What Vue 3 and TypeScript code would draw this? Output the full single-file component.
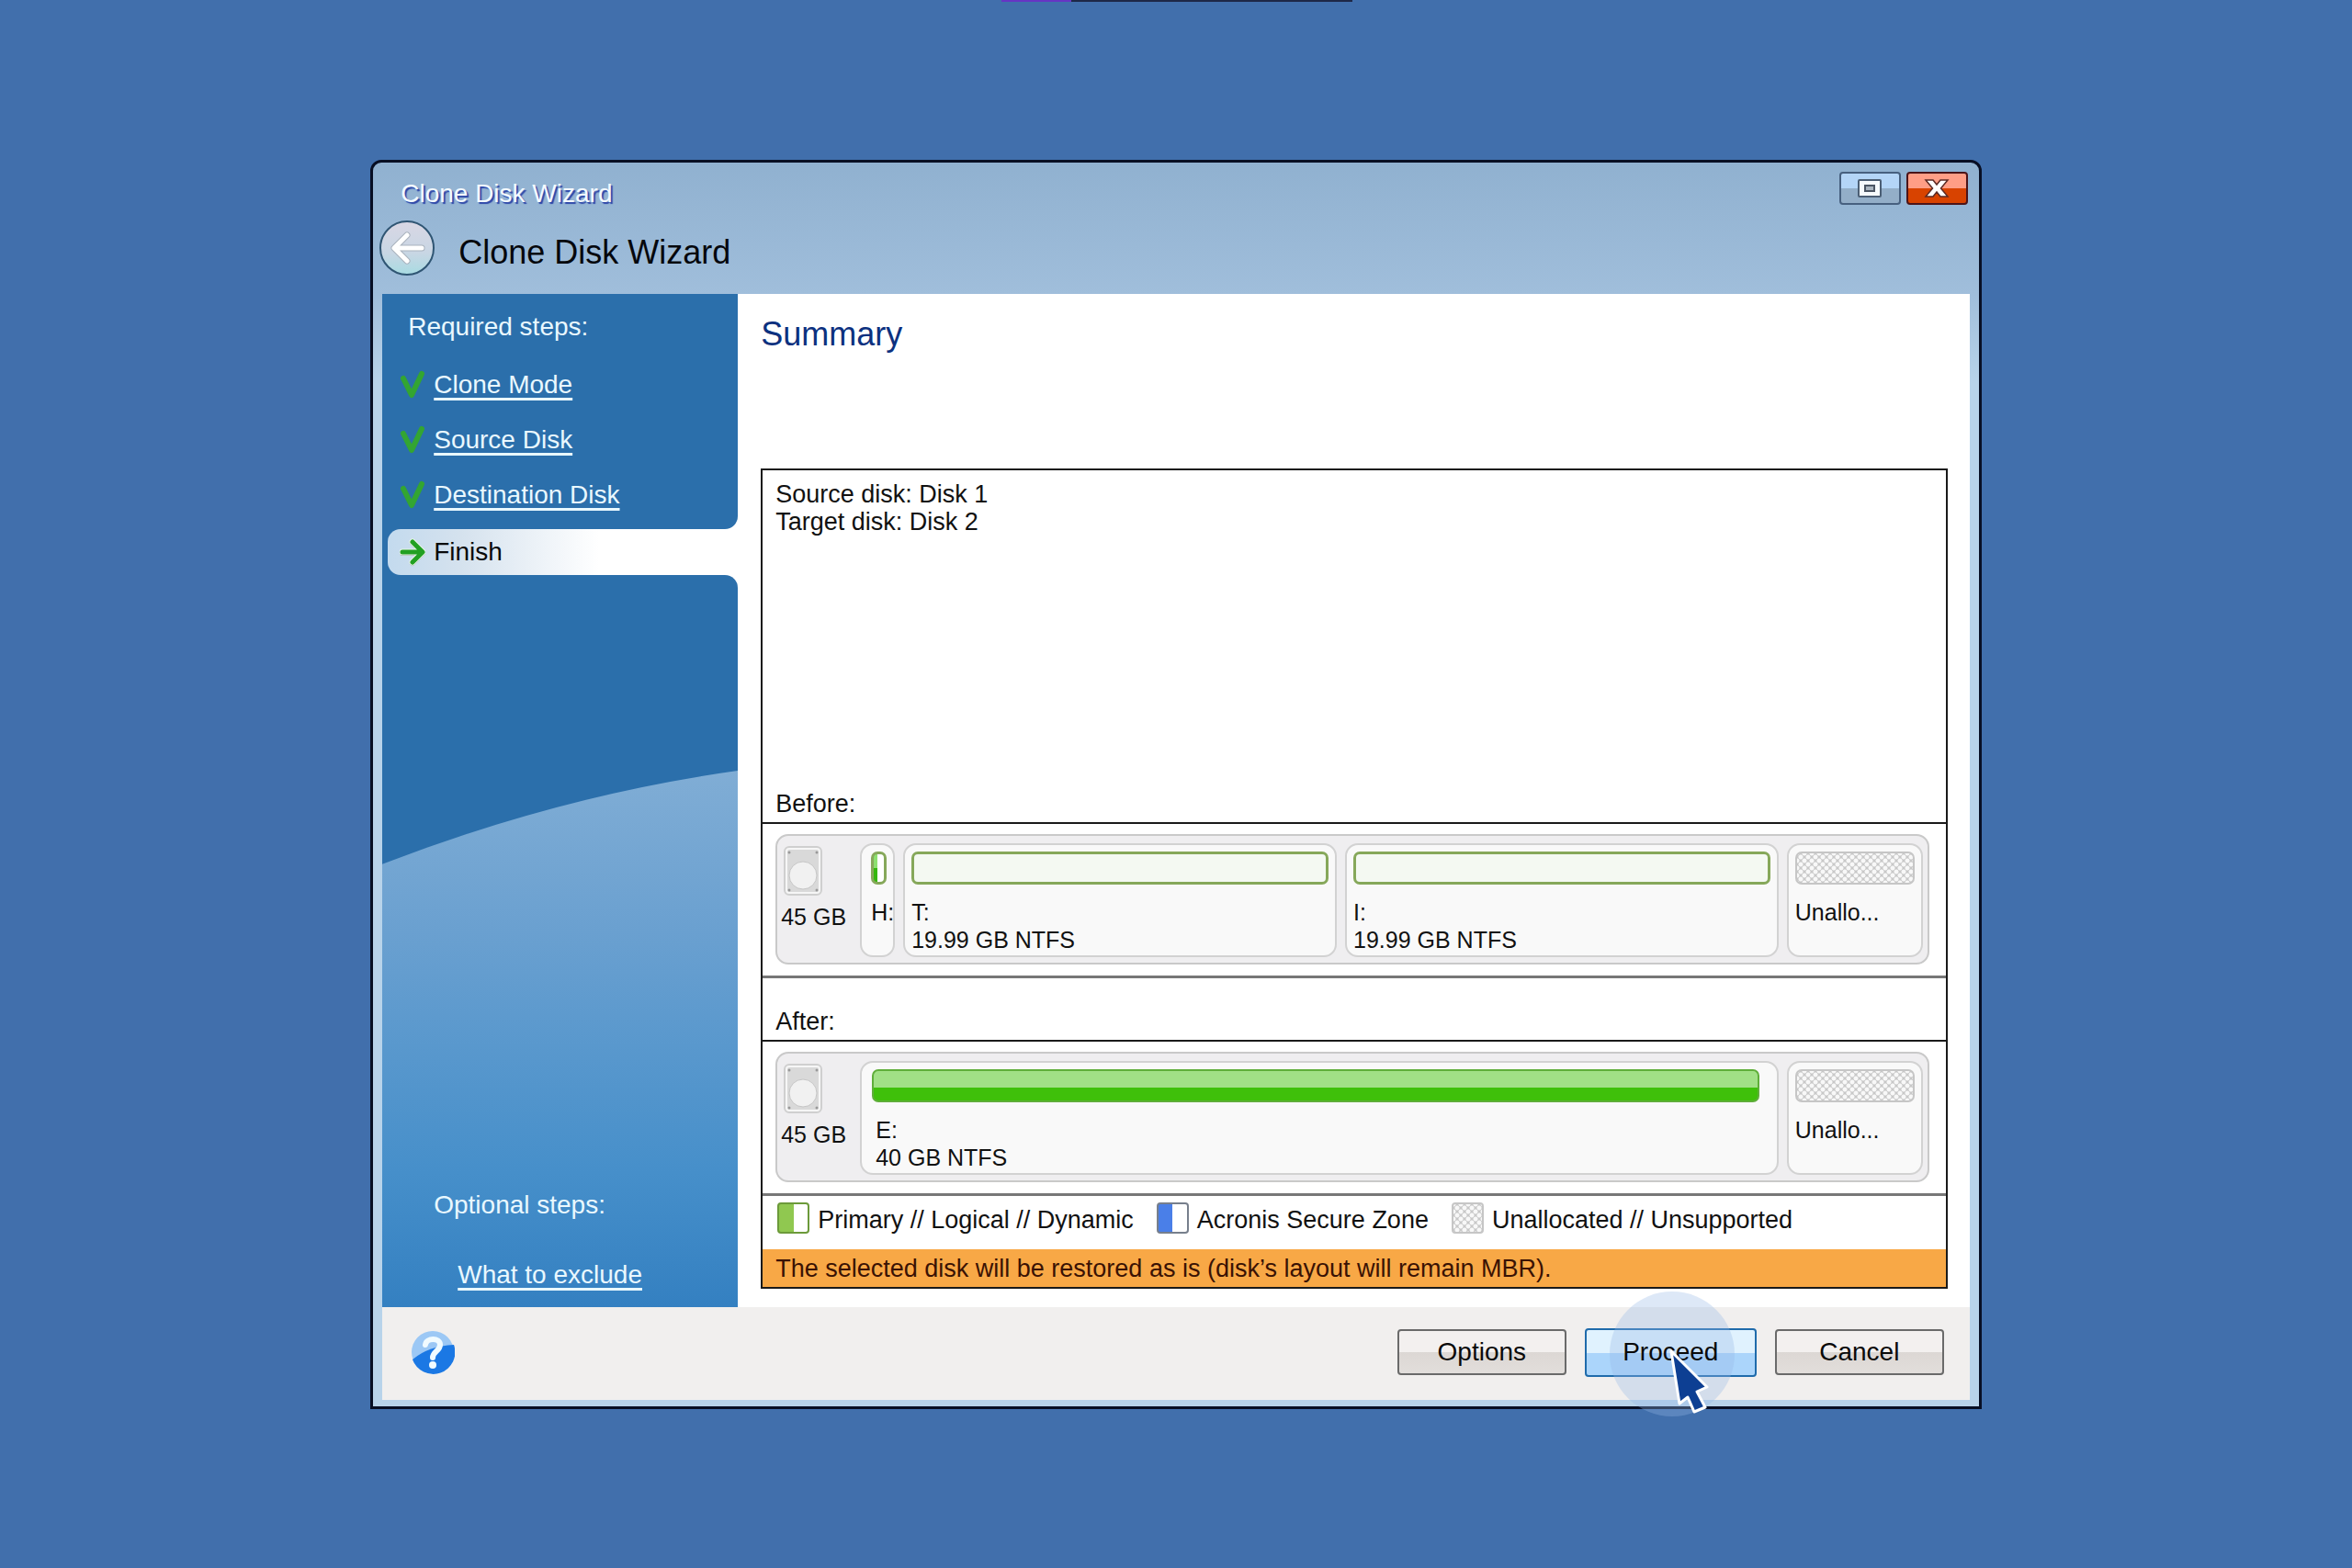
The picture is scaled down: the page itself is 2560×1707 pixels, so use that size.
<script setup lang="ts">
interface Partition {
  label: string
  detail?: string
  kind: 'small' | 'empty' | 'full' | 'free'
}

interface Disk {
  caption: string
  size: string
  partitions: Partition[]
}

const doneSteps: string[] = ['Clone Mode', 'Source Disk', 'Destination Disk']

const before: Disk = {
  caption: 'Before:',
  size: '45 GB',
  partitions: [
    { label: 'H:', kind: 'small' },
    { label: 'T:', detail: '19.99 GB NTFS', kind: 'empty' },
    { label: 'I:', detail: '19.99 GB NTFS', kind: 'empty' },
    { label: 'Unallo...', kind: 'free' },
  ],
}

const after: Disk = {
  caption: 'After:',
  size: '45 GB',
  partitions: [
    { label: 'E:', detail: '40 GB NTFS', kind: 'full' },
    { label: 'Unallo...', kind: 'free' },
  ],
}

const disks: Disk[] = [before, after]

const legend = [
  { text: 'Primary // Logical // Dynamic', kind: 'primary' },
  { text: 'Acronis Secure Zone', kind: 'zone' },
  { text: 'Unallocated // Unsupported', kind: 'free' },
]
</script>

<template>
  <div class="desktop">
    <div class="edge-strip"></div>
    <div class="window">
      <header class="header">
        <div class="titlebar">
          <span class="caption">Clone Disk Wizard</span>
          <div class="window-buttons">
            <button class="win-btn maximize" type="button" aria-label="Maximize">
              <svg width="28" height="22" viewBox="0 0 28 22">
                <rect x="2" y="2" width="24" height="18" rx="1" fill="#f6fafd" stroke="#4b5e74" stroke-width="2" />
                <rect x="9" y="8" width="10" height="6" fill="#a9b4bf" stroke="#4b5563" stroke-width="2" />
              </svg>
            </button>
            <button class="win-btn close" type="button" aria-label="Close">
              <svg width="28" height="22" viewBox="0 0 28 22">
                <path
                  d="M2 2H10L14 7L18 2H26L18.500 11L26 20H18L14 15L10 20H2L9.500 11Z"
                  fill="#fff"
                  stroke="#5c2a24"
                  stroke-width="1.500"
                />
              </svg>
            </button>
          </div>
        </div>
        <div class="heading">
          <button class="back" type="button" aria-label="Back">
            <svg width="40" height="40" viewBox="0 0 40 40" fill="none" stroke-linecap="round" stroke-linejoin="round">
              <path d="M20 6L6 20L20 34M7 20H36" stroke="#a9b2bd" stroke-width="7" />
              <path d="M20 6L6 20L20 34M7 20H36" stroke="#fff" stroke-width="5" />
            </svg>
          </button>
          <h1>Clone Disk Wizard</h1>
        </div>
      </header>

      <div class="body">
        <nav class="sidebar">
          <div class="required">
            <p>Required steps:</p>
            <ul>
              <li v-for="step in doneSteps" :key="step">
                <svg width="26" height="32" viewBox="0 0 26 32">
                  <path
                    d="M3 9L12 27L23 4"
                    fill="none"
                    stroke="#33a532"
                    stroke-width="6"
                    stroke-linecap="round"
                    stroke-linejoin="round"
                  />
                </svg>
                <a href="#">{{ step }}</a>
              </li>
            </ul>
          </div>
          <div class="current-row">
            <div class="current">
              <svg width="28" height="32" viewBox="0 0 28 32" fill="none" stroke-linecap="round" stroke-linejoin="round">
                <path d="M3 17H24M14 6L25 17L14 28" stroke="#8f9a94" stroke-width="6" />
                <path d="M3 16H24M14 5L25 16L14 27" stroke="#e8f5e8" stroke-width="7" />
                <path d="M3 16H24M14 5L25 16L14 27" stroke="#22a022" stroke-width="5" />
              </svg>
              <span>Finish</span>
            </div>
          </div>
          <div class="optional">
            <svg class="wave" viewBox="0 0 387 585" preserveAspectRatio="none">
              <defs>
                <linearGradient id="waveFill" x1="0" y1="0" x2="0" y2="1">
                  <stop offset="0" stop-color="#80add5" />
                  <stop offset="0.3" stop-color="#6aa0d0" />
                  <stop offset="0.75" stop-color="#468fca" />
                  <stop offset="1" stop-color="#3480c1" />
                </linearGradient>
              </defs>
              <path d="M0 102Q193 27 387 0V585H0Z" fill="url(#waveFill)" />
            </svg>
            <p>Optional steps:</p>
            <a href="#">What to exclude</a>
          </div>
        </nav>

        <main class="content">
          <h2>Summary</h2>
          <section class="report">
            <div class="log">
              <div>Source disk: Disk 1</div>
              <div>Target disk: Disk 2</div>
            </div>
            <template v-for="disk in disks" :key="disk.caption">
              <div class="disk-caption">{{ disk.caption }}</div>
              <div class="disk-row">
                <div class="disk">
                  <div class="drive">
                    <svg width="42" height="54" viewBox="0 0 42 54">
                      <rect x="1" y="1" width="40" height="52" rx="5" fill="#f6f6f6" stroke="#cfcfcf" stroke-width="2" />
                      <rect x="4" y="4" width="34" height="46" rx="2" fill="#d9d9d9" />
                      <circle cx="21" cy="32" r="15" fill="#f1f1f1" stroke="#c6c6c6" />
                      <g fill="#999">
                        <circle cx="6" cy="7" r="1.500" />
                        <circle cx="36" cy="7" r="1.500" />
                        <circle cx="6" cy="48" r="1.500" />
                        <circle cx="36" cy="48" r="1.500" />
                      </g>
                    </svg>
                    <span>{{ disk.size }}</span>
                  </div>
                  <div v-for="part in disk.partitions" :key="part.label" class="partition" :class="part.kind">
                    <div class="bar"></div>
                    <div class="part-text">
                      <div>{{ part.label }}</div>
                      <div v-if="part.detail">{{ part.detail }}</div>
                    </div>
                  </div>
                </div>
              </div>
            </template>
            <div class="legend">
              <div v-for="item in legend" :key="item.kind" class="legend-item">
                <i class="swatch" :class="item.kind"></i>
                <span>{{ item.text }}</span>
              </div>
            </div>
            <div class="notice">The selected disk will be restored as is (disk’s layout will remain MBR).</div>
          </section>
        </main>
      </div>

      <footer class="footer">
        <button class="help" type="button" aria-label="Help">
          <svg width="48" height="48" viewBox="0 0 48 48">
            <circle cx="24" cy="24" r="23" fill="#9cc8f5" />
            <path d="M2 32Q20 17 47 16A23 23 0 0 1 2 32Z" fill="#1b78e4" />
            <path
              d="M16 16C17 8 32 8 32 16C32 23 24 23 24 30"
              fill="none"
              stroke="#f1fbff"
              stroke-width="6"
              stroke-linecap="round"
            />
            <circle cx="24" cy="38" r="4" fill="#f1fbff" />
          </svg>
        </button>
        <div class="actions">
          <button class="action" type="button">Options</button>
          <button class="action default" type="button">
            <span class="halo"></span>
            <span class="action-text">Proceed</span>
            <svg class="cursor" width="52" height="76" viewBox="0 0 52 76">
              <path
                d="M6 5L45 44L34 49L43 66L31 71L24 55L15 62Z"
                fill="#0d3f93"
                stroke="#fff"
                stroke-width="3"
                stroke-linejoin="round"
              />
            </svg>
          </button>
          <button class="action" type="button">Cancel</button>
        </div>
      </footer>
    </div>
  </div>
</template>

<style>
body {
  margin: 0;
}
</style>

<style scoped>
* {
  box-sizing: border-box;
}

.desktop {
  position: relative;
  min-height: 100vh;
  display: flex;
  align-items: center;
  justify-content: center;
  background: #416fac;
  color: #111;
  font-family: 'Liberation Sans', Arial, sans-serif;
  font-size: 27px;
  line-height: 30px;
}

.edge-strip {
  position: absolute;
  top: 0;
  left: 50%;
  width: 382px;
  height: 2px;
  margin-left: -190px;
  background: linear-gradient(to right, #6635c4 76px, #1e2848 76px);
}

button {
  padding: 0;
  font-family: inherit;
  cursor: pointer;
}

svg {
  display: block;
  flex: none;
}

h1,
h2,
p,
ul {
  margin: 0;
  padding: 0;
  font-weight: 400;
  list-style: none;
}

.window {
  width: 68.5vw;
  min-width: 1500px;
  padding: 0 10px 7px;
  border: 3px solid #080f24;
  border-radius: 12px 12px 0 0;
  background: linear-gradient(#90b1d0 0, #a0bedb 144px, #b8d3ea 240px);
}

.header {
  height: 143px;
  padding-top: 10px;
}

.titlebar {
  display: flex;
  justify-content: space-between;
  padding: 0 2px 0 20px;
}

.caption {
  padding-top: 8px;
  color: #f4faff;
  font-size: 28px;
  line-height: 32px;
  text-shadow: 2px 2px 1px #2c45a8;
}

.window-buttons {
  display: flex;
  gap: 6px;
}

.win-btn {
  display: flex;
  align-items: center;
  justify-content: center;
  width: 67px;
  height: 36px;
  border: 2px solid #47607f;
  border-radius: 4px;
}

.maximize {
  background: linear-gradient(#b4d5f7 50%, #93aec8 50%);
}

.close {
  border-color: #4c1418;
  background: linear-gradient(#ff9e86 50%, #d84300 50%);
}

.heading {
  display: flex;
  align-items: center;
  gap: 26px;
  margin-top: 13px;
  margin-left: -3px;
}

.back {
  display: flex;
  align-items: center;
  justify-content: center;
  width: 60px;
  height: 60px;
  border: 2px solid #2f5573;
  border-radius: 50%;
  background: linear-gradient(#d9d7e4, #c8d6e4 60%, #a9dbe2);
}

.heading h1 {
  padding-top: 10px;
  color: #05070c;
  font-size: 36px;
  line-height: 40px;
}

.body {
  display: flex;
  background: #fff;
}

.sidebar {
  display: flex;
  flex-direction: column;
  flex: none;
  width: 387px;
  color: #e9f8ff;
  font-size: 28px;
  line-height: 32px;
}

.sidebar a {
  color: inherit;
  text-decoration-thickness: 3px;
  text-underline-offset: 5px;
  text-decoration-skip-ink: none;
}

.required {
  padding: 20px 0 21px 20px;
  background: #2b6fab;
  border-bottom-right-radius: 14px;
}

.required p {
  padding-left: 8px;
  margin-bottom: 31px;
}

.required ul {
  display: flex;
  flex-direction: column;
  gap: 28px;
}

.required li {
  display: flex;
  gap: 10px;
}

.current-row {
  padding-left: 6px;
  background: linear-gradient(to right, #2b6fab 30px, #fff 30px);
}

.current {
  display: flex;
  align-items: center;
  gap: 9px;
  height: 50px;
  padding-left: 13px;
  border-radius: 14px 0 0 14px;
  background: linear-gradient(to right, #c3daee, #d5e2ee 80px, #fff 230px);
  color: #0a0a0a;
}

.optional {
  position: relative;
  display: flex;
  flex-direction: column;
  align-items: flex-start;
  justify-content: flex-end;
  flex: 1;
  gap: 44px;
  padding: 0 0 19px 56px;
  background: #2b6fab;
  border-top-right-radius: 14px;
}

.wave {
  position: absolute;
  top: 213px;
  left: 0;
  width: 100%;
  height: calc(100% - 213px);
}

.optional p,
.optional a {
  position: relative;
}

.optional a {
  margin-left: 26px;
}

.content {
  flex: 1;
  padding: 24px 24px 20px 25px;
}

.content h2 {
  margin-bottom: 126px;
  color: #0c317f;
  font-size: 36px;
  line-height: 40px;
}

.report {
  border: 2px solid #1a1a1a;
}

.log {
  min-height: 348px;
  padding: 11px 14px;
}

.disk-caption {
  padding: 0 14px 5px;
}

.disk-row {
  padding: 11px 18px 12px 14px;
  border-top: 2px solid #1a1a1a;
  border-bottom: 3px solid #777;
}

.disk-row + .disk-caption {
  padding-top: 32px;
}

.disk {
  display: flex;
  gap: 9px;
  height: 142px;
  padding: 8px 5px 6px 4px;
  border: 2px solid #c9c9c9;
  border-radius: 14px;
  background: #efeef0;
  font-size: 25px;
}

.drive {
  flex: none;
  width: 77px;
  padding-top: 3px;
  white-space: nowrap;
}

.drive svg {
  margin: 0 0 8px 3px;
}

.partition {
  flex: 1;
  min-width: 0;
  padding: 7px;
  border: 2px solid #d2d2d2;
  border-radius: 14px;
  background: #f9f9f9;
  white-space: nowrap;
}

.bar {
  height: 36px;
  margin-bottom: 15px;
  border: 3px solid #86a85a;
  border-radius: 7px;
  background: #f4f9f2;
}

.small {
  flex: none;
  width: 38px;
  padding: 7px 7px 7px 10px;
}

.small .bar {
  background: linear-gradient(to right, transparent 4px, #fff 4px), linear-gradient(#8de070 50%, #35b80c 50%);
}

.full {
  padding: 7px 19px 7px 11px;
}

.full .bar {
  border: 2px solid #5fae3a;
  background: linear-gradient(#a1e086 55%, #3fc00a 55%);
}

.full .part-text {
  padding-left: 4px;
}

.partition.free {
  flex: none;
  width: 148px;
}

.free .bar,
.swatch.free {
  border: 2px solid #c6c6c6;
  background-color: #c8c8c8;
  background-image: radial-gradient(circle, #f8f8f8 2px, transparent 3px),
    radial-gradient(circle, #f8f8f8 2px, transparent 3px);
  background-position: 0 0, 4px 4px;
  background-size: 8px 8px;
}

.legend {
  display: flex;
  align-items: center;
  gap: 25px;
  padding: 7px 16px 17px;
}

.legend-item {
  display: flex;
  align-items: center;
  gap: 9px;
}

.legend-item span {
  padding-top: 4px;
}

.swatch {
  width: 35px;
  height: 34px;
  border: 2px solid #777f8c;
  border-radius: 4px;
}

.swatch.primary {
  border-color: #6c9a3a;
  background: linear-gradient(to right, #90c850 50%, #fff 50%);
}

.swatch.zone {
  background: linear-gradient(to right, #4a7fe8 50%, #fff 50%);
}

.notice {
  padding: 6px 14px 5px;
  background: #f8a846;
  color: #3a1204;
}

.footer {
  display: flex;
  align-items: center;
  justify-content: space-between;
  height: 101px;
  padding: 0 28px 2px 31px;
  background: #f1efee;
}

.help {
  border: 0;
  background: none;
}

.actions {
  display: flex;
  align-items: center;
  gap: 20px;
}

.action {
  width: 184px;
  height: 50px;
  border: 2px solid #6a6a6a;
  border-radius: 4px;
  background: linear-gradient(#f3f0ef 50%, #dcd7d4 50%, #e2dedb);
  color: #0a0a0a;
  font-size: 28px;
  line-height: 40px;
}

.action.default {
  position: relative;
  width: 187px;
  height: 53px;
  border-color: #1f6bab;
  background: linear-gradient(#e0f2fe 50%, #abd5fb 50%);
}

.action-text {
  position: relative;
}

.halo {
  position: absolute;
  top: -42px;
  left: 25px;
  width: 136px;
  height: 136px;
  border-radius: 50%;
  background: rgba(150, 182, 230, 0.32);
  pointer-events: none;
}

.cursor {
  position: absolute;
  top: 18px;
  left: 86px;
  pointer-events: none;
}
</style>
